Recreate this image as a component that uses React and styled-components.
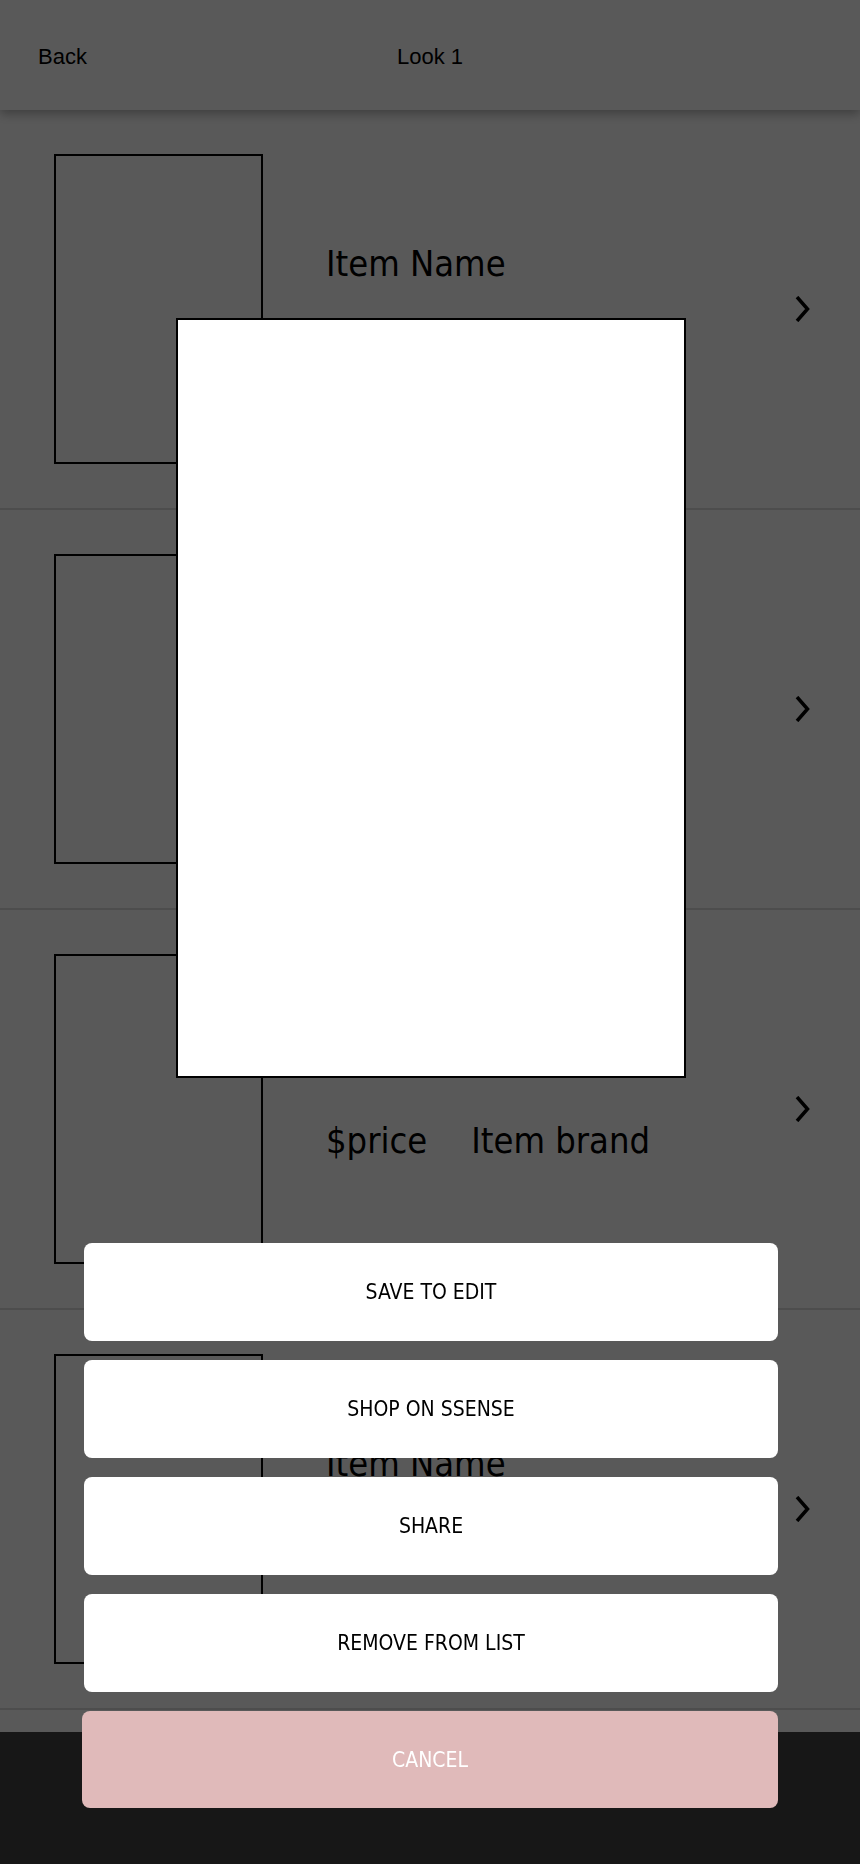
import React from 'react';
import styled, { createGlobalStyle } from 'styled-components';

const GlobalStyle = createGlobalStyle`
  html, body {
    margin: 0;
    padding: 0;
    background: #ffffff;
  }
  body {
    font-family: "DejaVu Sans", "Liberation Sans", sans-serif;
  }
  * {
    box-sizing: border-box;
  }
`;

// page under the overlay
const Page = styled.div`
  width: 100vw;
  height: 100vh;
  display: flex;
  flex-direction: column;
  background: #ffffff;
  overflow: hidden;
`;

const Header = styled.header`
  position: relative;
  z-index: 1;
  flex: 0 0 110px;
  display: grid;
  grid-template-columns: 1fr auto 1fr;
  align-items: center;
  padding: 3px 38px 0;
  background: #ffffff;
  box-shadow: 0 4px 10px rgba(0, 0, 0, 0.3);
  font-family: "Liberation Sans", Arial, sans-serif;
  font-size: 22px;
  color: #000;
`;

const HeaderTitle = styled.div`
  text-align: center;
`;

const List = styled.div`
  flex: 1;
  overflow: hidden;
`;

const Row = styled.div`
  height: 400px;
  display: flex;
  align-items: flex-start;
  padding: 44px 50px 0 54px;
  border-bottom: 2px solid #dddddd;
`;

const Thumb = styled.div`
  flex: 0 0 209px;
  height: 310px;
  border: 2px solid #000;
`;

const Info = styled.div`
  flex: 1;
  margin: 92px 0 0 63px;
  display: flex;
  flex-direction: column;
  gap: 41px;
  font-family: "DejaVu Sans Condensed", "DejaVu Sans", sans-serif;
  font-stretch: condensed;
  font-size: 36px;
  line-height: 36px;
  color: #000;
`;

const MetaLine = styled.div`
  display: flex;
  gap: 44px;
`;

const Chevron = styled.svg`
  align-self: center;
  margin-top: -44px;
  flex: 0 0 auto;
`;

const TabBar = styled.div`
  flex: 0 0 132px;
  background: #444444;
`;

// overlay with preview + action sheet
const Overlay = styled.div`
  position: fixed;
  inset: 0;
  z-index: 10;
  background: rgba(0, 0, 0, 0.65);
  display: flex;
  flex-direction: column;
  align-items: center;
  padding: 318px 0 56px;
`;

const Preview = styled.div`
  width: 510px;
  height: 760px;
  margin-left: 2px;
  background: #ffffff;
  border: 2px solid #000;
`;

const Sheet = styled.div`
  margin-top: auto;
  width: 696px;
  display: flex;
  flex-direction: column;
  gap: 19px;
`;

const SheetButton = styled.button`
  height: ${(p) => (p.$cancel ? '97px' : '98px')};
  margin-left: ${(p) => (p.$cancel ? '0' : '2px')};
  border: 0;
  border-radius: 8px;
  background: ${(p) => (p.$cancel ? '#e0baba' : '#ffffff')};
  color: ${(p) => (p.$cancel ? '#ffffff' : '#000000')};
  font-family: "DejaVu Sans Condensed", "DejaVu Sans", sans-serif;
  font-stretch: condensed;
  font-size: 21px;
  text-transform: uppercase;
  cursor: pointer;
  padding: 0;
`;

const items = [1, 2, 3, 4];

function ChevronIcon() {
  return (
    <Chevron width="15" height="26" viewBox="0 0 15 26">
      <polyline points="2,1 12.5,13 2,25" fill="none" stroke="#000" strokeWidth="3.5" strokeLinejoin="miter" />
    </Chevron>
  );
}

export default function App() {
  return (
    <>
      <GlobalStyle />
      <Page>
        <Header>
          <div>Back</div>
          <HeaderTitle>Look 1</HeaderTitle>
          <div />
        </Header>
        <List>
          {items.map((i) => (
            <Row key={i}>
              <Thumb />
              <Info>
                <div>Item Name</div>
                <MetaLine>
                  <span>$price</span>
                  <span>Item brand</span>
                </MetaLine>
              </Info>
              <ChevronIcon />
            </Row>
          ))}
        </List>
        <TabBar />
      </Page>
      <Overlay>
        <Preview />
        <Sheet>
          <SheetButton>Save to edit</SheetButton>
          <SheetButton>Shop on SSENSE</SheetButton>
          <SheetButton>Share</SheetButton>
          <SheetButton>Remove from list</SheetButton>
          <SheetButton $cancel>Cancel</SheetButton>
        </Sheet>
      </Overlay>
    </>
  );
}
